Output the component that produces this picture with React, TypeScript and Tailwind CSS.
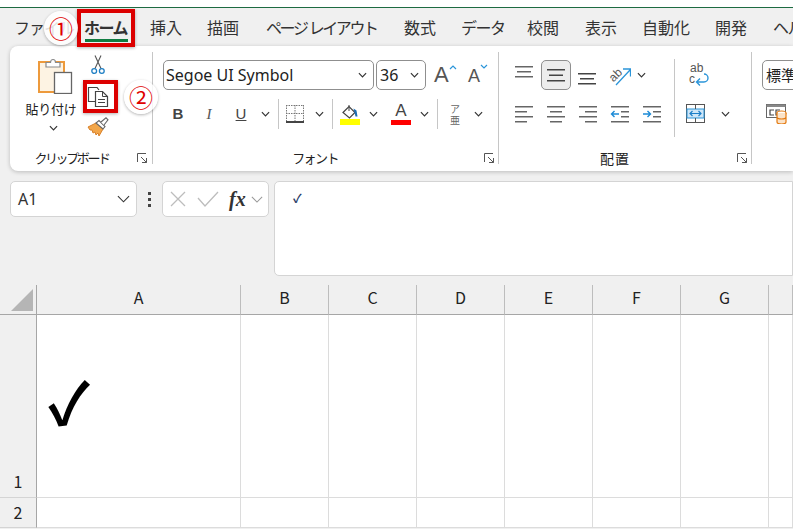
import type { ReactNode } from 'react'

const JP = "font-['Noto_Sans_CJK_JP','Noto_Sans',sans-serif]"

const TABS = [
  { label: 'ファイル', cls: 'tracking-[-1px] w-[48px] ml-[14px]' },
  { label: 'ホーム', cls: 'tracking-[-1.5px] font-bold w-[43px] ml-[22px]' },
  { label: '挿入', cls: 'w-[33px] ml-[23px]' },
  { label: '描画', cls: 'w-[33px] ml-[24px]' },
  { label: 'ページ レイアウト', cls: 'tracking-[-2.4px] [word-spacing:1px] w-[112px] ml-[26px]' },
  { label: '数式', cls: 'w-[33px] ml-[26px]' },
  { label: 'データ', cls: 'tracking-[-1.5px] w-[41px] ml-[24px]' },
  { label: '校閲', cls: 'w-[33px] ml-[25px]' },
  { label: '表示', cls: 'w-[33px] ml-[25px]' },
  { label: '自動化', cls: 'w-[49px] ml-[24px]' },
  { label: '開発', cls: 'w-[33px] ml-[24px]' },
  { label: 'ヘルプ', cls: 'tracking-[-1.5px] w-[45px] ml-[25px]' },
]

function Chevron({ cls = '' }: { cls?: string }) {
  return (
    <svg viewBox="0 0 10 6" className={`w-[9px] h-[6px] shrink-0 ${cls}`}>
      <path d="M1 1l4 4 4-4" fill="none" stroke="#333" strokeWidth="1.3" />
    </svg>
  )
}

function Launcher() {
  return (
    <svg viewBox="0 0 10 10" className="w-[10px] h-[10px] shrink-0">
      <path d="M.5 9V.5H9M4 4l5.5 5.5M9.5 5v4.5H5" fill="none" stroke="#555" strokeWidth="1" />
    </svg>
  )
}

function Sep({ cls = 'h-[112px] mt-[6px]' }: { cls?: string }) {
  return <div className={`w-px shrink-0 bg-[#c6c6c6] ${cls}`} />
}

function GroupFoot({ label, labelCls, launcherCls }: { label: string; labelCls: string; launcherCls: string }) {
  return (
    <div className="h-[26px] flex items-center">
      <div className={`flex-1 text-center text-[#222] ${labelCls}`}>{label}</div>
      <div className={launcherCls}>
        <Launcher />
      </div>
    </div>
  )
}

function Lines({ rows, color = '#666', w = 20 }: { rows: [number, number, number][]; color?: string; w?: number }) {
  return (
    <svg viewBox={`0 0 ${w} 20`} width={w} height={20} className="shrink-0">
      {rows.map(([x, y, l], i) => (
        <rect key={i} x={x} y={y} width={l} height={1.5} fill={color} />
      ))}
    </svg>
  )
}

function Slot({ cls, children }: { cls: string; children: ReactNode }) {
  return <div className={`flex items-center justify-center shrink-0 ${cls}`}>{children}</div>
}

function PasteIcon() {
  return (
    <svg viewBox="0 0 36 38" width={36} height={38}>
      <rect x="2" y="6" width="25" height="30" fill="#fdf3e3" stroke="#ed9a3c" strokeWidth="2" />
      <path d="M9 11V6.5h4.5a2.5 3 0 0 1 5 0H23V11z" fill="#fff" stroke="#8a8a8a" strokeWidth="1.2" />
      <rect x="17.5" y="16.5" width="17" height="21" fill="#fff" stroke="#666" strokeWidth="1.3" />
    </svg>
  )
}

function ScissorsIcon() {
  return (
    <svg viewBox="0 0 14 20" width={14} height={20}>
      <path d="M4 .5l6 13M10 .5l-6 13" stroke="#555" strokeWidth="1.1" fill="none" />
      <circle cx="3.2" cy="16" r="2.4" fill="none" stroke="#1f7fc4" strokeWidth="1.3" />
      <circle cx="10.8" cy="16" r="2.4" fill="none" stroke="#1f7fc4" strokeWidth="1.3" />
    </svg>
  )
}

function CopyIcon() {
  return (
    <svg viewBox="0 0 22 20" width={22} height={20}>
      <path d="M9 14.5H1.5V.5H10l2 2.5" fill="none" stroke="#444" strokeWidth="1.2" />
      <path d="M8.5 4.5h7l5 5v10h-12z" fill="#fff" stroke="#444" strokeWidth="1.2" />
      <path d="M15.5 4.5v5h5M11 12.5h7M11 15.5h7" fill="none" stroke="#444" strokeWidth="1" />
    </svg>
  )
}

function BrushIcon() {
  return (
    <svg viewBox="0 0 22 20" width={22} height={20}>
      <path d="M1 10l8-4 7 6-4 7-1-3-2 2-1-3-2 1-1-3-2 0z" fill="#f2a64a" stroke="#d9812a" strokeWidth="1" />
      <path d="M9 6l7 6 2-2.5-6-6z" fill="#fff" stroke="#666" strokeWidth="1.1" />
      <path d="M14 5l5-4.2 2 2L17 8" fill="#fff" stroke="#666" strokeWidth="1.1" />
    </svg>
  )
}

function BorderIcon() {
  return (
    <svg viewBox="0 0 20 20" width={20} height={20}>
      <path d="M1 1.5h18M1 9.5h18M1.5 1v16M10 1v16M18.5 1v16" stroke="#777" strokeWidth="1" strokeDasharray="1.5 1" fill="none" />
      <rect x="1" y="17" width="18" height="2" fill="#444" />
    </svg>
  )
}

function FillIcon() {
  return (
    <svg viewBox="0 0 20 21" width={20} height={21}>
      <path d="M3 8.5L9 2.5l6 6-5.5 5.5z" fill="#fff" stroke="#444" strokeWidth="1.2" />
      <path d="M9 1v6" stroke="#444" strokeWidth="1" />
      <path d="M13.5 4.5l3 2 1 6h-2z" fill="#1f6fb2" />
      <rect x="0" y="15" width="20" height="6" fill="#ffff00" />
    </svg>
  )
}

function FontColorIcon() {
  return (
    <div className="flex flex-col items-center w-[20px] h-[22px]">
      <span className="text-[17px] leading-[15px] text-[#444] font-['Liberation_Sans',sans-serif]">A</span>
      <span className="w-[20px] h-[5px] bg-[#ff0000] mt-[2px]" />
    </div>
  )
}

function OrientationIcon() {
  return (
    <svg viewBox="0 0 22 22" width={22} height={22}>
      <text x="-1" y="15" fontSize="12" fill="#555" transform="rotate(-45 6 10)" fontFamily="Liberation Sans">ab</text>
      <path d="M7 21L21 6M14 5h7.5v7.5" fill="none" stroke="#2b95d9" strokeWidth="1.3" />
    </svg>
  )
}

function WrapIcon() {
  return (
    <div className="relative w-[20px] h-[24px] font-['Liberation_Sans',sans-serif] text-[12px] leading-[10px] text-[#555]">
      <div className="pl-[1px]">ab</div>
      <div className="mt-[1px]">c</div>
      <svg viewBox="0 0 20 24" width={20} height={24} className="absolute left-0 top-0">
        <path d="M8 19h7a3.5 3.5 0 0 0 0-8M11 15.5L7.5 19l3.5 3.5" fill="none" stroke="#2b95d9" strokeWidth="1.4" />
      </svg>
    </div>
  )
}

function MergeIcon() {
  return (
    <svg viewBox="0 0 20 20" width={20} height={20}>
      <rect x=".5" y=".5" width="18" height="18" fill="#fff" stroke="#555" />
      <rect x="1" y="5" width="17" height="9" fill="#cfe6f7" stroke="#2b95d9" />
      <path d="M9.5 1v4M9.5 14v4" stroke="#555" />
      <path d="M4 9.5h11M6.5 7L4 9.5 6.5 12M12.5 7L15 9.5 12.5 12" fill="none" stroke="#1c7fc9" strokeWidth="1.2" />
    </svg>
  )
}

function IndentIcon({ out }: { out?: boolean }) {
  return (
    <svg viewBox="0 0 20 20" width={20} height={20}>
      <path d="M1 2.7h18M1 17.7h18M11 7.7h8M11 12.7h8" stroke="#666" strokeWidth="1.5" />
      <path
        d={out ? 'M1.5 10H9M4.5 7L1.5 10 4.5 13' : 'M1 10h7.5M5.5 7l3 3-3 3'}
        fill="none"
        stroke="#1c8ad6"
        strokeWidth="1.4"
      />
    </svg>
  )
}

function CondIcon() {
  return (
    <svg viewBox="0 0 22 20" width={22} height={20}>
      <rect x=".5" y=".5" width="19" height="13" fill="#fff" stroke="#666" />
      <rect x=".5" y=".5" width="19" height="2.5" fill="#888" />
      <path d="M8 6H4v5h4M14 6h-4v5h4" fill="none" stroke="#444" strokeWidth="1.2" />
      <ellipse cx="15.5" cy="9" rx="4.5" ry="2" fill="#fff" stroke="#e3790f" strokeWidth="1.2" />
      <path d="M11 9v9a4.5 2 0 0 0 9 0V9M11 13a4.5 2 0 0 0 9 0" fill="#fbe3c8" stroke="#e3790f" strokeWidth="1.2" />
    </svg>
  )
}

function ColumnHeader({ label }: { label: string }) {
  return (
    <div className="h-[30px] bg-[#f0f0f0] border-r border-b border-r-[#bdbdbd] border-b-[#a6a6a6] flex items-center justify-center pb-[5px] text-[16px] text-[#222]">
      {label}
    </div>
  )
}

const COLUMNS = ['B', 'C', 'D', 'E', 'F', 'G', '']

export default function App() {
  return (
    <div className={`relative w-[793px] h-[529px] overflow-hidden bg-[#f0f0f0] ${JP}`}>
      <div className="h-[7px] bg-white" />
      <div className="h-px bg-[#1d6b41]" />

      {/* Tabs */}
      <div className="h-[38px] flex items-center whitespace-nowrap text-[16px] text-[#333]">
        {TABS.map(t => (
          <div key={t.label} className={`shrink-0 ${t.cls}`}>
            {t.label}
          </div>
        ))}
      </div>

      {/* Ribbon */}
      <div className="ml-[10px] h-[125px] bg-white rounded-l-[8px] shadow-[0_1px_4px_rgba(0,0,0,0.22)] flex">
        {/* Clipboard */}
        <div className="w-[142px] shrink-0 flex flex-col">
          <div className="flex-1 flex">
            <div className="w-[68px] ml-[7px] pt-[10px] flex flex-col items-center">
              <div className="ml-[7px]">
                <PasteIcon />
              </div>
              <div className="text-[13px] tracking-[-0.3px] text-[#222] mt-[6px] leading-[18px]">貼り付け</div>
              <Chevron cls="mt-[7px] ml-[4px]" />
            </div>
            <div className="ml-[2px] pt-[9px] flex flex-col items-center w-[22px]">
              <ScissorsIcon />
              <div className="mt-[12px]">
                <CopyIcon />
              </div>
              <div className="mt-[10px]">
                <BrushIcon />
              </div>
            </div>
          </div>
          <GroupFoot label="クリップボード" labelCls="text-[13px] tracking-[-2.4px] pr-[4px]" launcherCls="mr-[5px]" />
        </div>
        <Sep />

        {/* Font */}
        <div className="w-[345px] shrink-0 flex flex-col">
          <div className="flex-1 pt-[14px] pl-[10px]">
            <div className="flex items-center">
              <div className="w-[211px] h-[30px] border border-[#8f8f8f] rounded-[5px] flex items-center pl-[2px] pr-[6px] text-[16px] text-[#222] font-['Noto_Sans',sans-serif]">
                <span className="flex-1">Segoe UI Symbol</span>
                <Chevron />
              </div>
              <div className="ml-[2px] w-[50px] h-[30px] border border-[#8f8f8f] rounded-[5px] flex items-center pl-[3px] pr-[6px] text-[16px] text-[#222] font-['Noto_Sans',sans-serif]">
                <span className="flex-1">36</span>
                <Chevron />
              </div>
              <div className="ml-[8px] w-[22px] flex items-start text-[22px] leading-[24px] text-[#555] font-['Liberation_Sans',sans-serif]">
                A
                <svg viewBox="0 0 8 5" className="w-[8px] h-[5px] mt-[2px] shrink-0">
                  <path d="M1 4l3-3 3 3" fill="none" stroke="#2b95d9" strokeWidth="1.2" />
                </svg>
              </div>
              <div className="ml-[12px] w-[20px] flex items-start text-[18px] leading-[24px] text-[#555] font-['Liberation_Sans',sans-serif]">
                <span className="mt-[2px]">A</span>
                <svg viewBox="0 0 8 5" className="w-[8px] h-[5px] mt-[2px] shrink-0">
                  <path d="M1 1l3 3 3-3" fill="none" stroke="#2b95d9" strokeWidth="1.2" />
                </svg>
              </div>
            </div>
            <div className="flex items-center h-[28px] mt-[10px]">
              <Slot cls="w-[30px] text-[15px] font-bold text-[#444] font-['Liberation_Sans',sans-serif]">B</Slot>
              <Slot cls="w-[32px] text-[15px] italic text-[#555] font-['Liberation_Serif',serif]">I</Slot>
              <Slot cls="w-[32px] text-[15px] text-[#444] underline font-['Liberation_Sans',sans-serif]">U</Slot>
              <Slot cls="w-[16px]">
                <Chevron />
              </Slot>
              <Sep cls="h-[30px] ml-[5px]" />
              <Slot cls="w-[26px] ml-[3px]">
                <BorderIcon />
              </Slot>
              <Slot cls="w-[22px]">
                <Chevron />
              </Slot>
              <Sep cls="h-[30px] ml-[2px]" />
              <Slot cls="w-[27px] ml-[3px]">
                <FillIcon />
              </Slot>
              <Slot cls="w-[20px]">
                <Chevron />
              </Slot>
              <Slot cls="w-[36px]">
                <FontColorIcon />
              </Slot>
              <Slot cls="w-[10px]">
                <Chevron />
              </Slot>
              <Sep cls="h-[30px] ml-[8px]" />
              <Slot cls="w-[34px] text-[10px] leading-[11px] text-[#666] text-center">
                <div>
                  ア
                  <br />亜
                </div>
              </Slot>
              <Slot cls="w-[12px]">
                <Chevron />
              </Slot>
            </div>
          </div>
          <GroupFoot label="フォント" labelCls="text-[13px] tracking-[-1.6px]" launcherCls="ml-[7px] mr-[4px]" />
        </div>
        <Sep />

        {/* Alignment */}
        <div className="w-[252px] shrink-0 flex flex-col">
          <div className="flex-1 flex pt-[14px]">
            <div className="w-[175px] pl-[9px]">
              <div className="flex items-center h-[30px]">
                <Slot cls="w-[32px] mb-[2px]">
                  <Lines rows={[[1, 2, 18], [3, 7, 14], [1, 12, 18]]} />
                </Slot>
                <Slot cls="w-[30px] h-[30px] bg-[#ededed] border border-[#8f8f8f] rounded-[5px] ml-px">
                  <Lines rows={[[1, 4, 18], [3, 9.5, 14], [1, 15, 18]]} color="#444" />
                </Slot>
                <Slot cls="w-[32px]">
                  <Lines rows={[[1, 8, 18], [3, 13, 14], [1, 18, 18]]} color="#444" />
                </Slot>
                <Slot cls="w-[24px] ml-[5px]">
                  <OrientationIcon />
                </Slot>
                <Slot cls="w-[18px]">
                  <Chevron />
                </Slot>
              </div>
              <div className="flex items-center h-[28px] mt-[10px]">
                <Slot cls="w-[32px]">
                  <Lines rows={[[1, 2, 18], [1, 7, 12], [1, 12, 18], [1, 17, 12]]} />
                </Slot>
                <Slot cls="w-[32px]">
                  <Lines rows={[[1, 2, 18], [4, 7, 12], [1, 12, 18], [4, 17, 12]]} />
                </Slot>
                <Slot cls="w-[32px]">
                  <Lines rows={[[1, 2, 18], [7, 7, 12], [1, 12, 18], [7, 17, 12]]} />
                </Slot>
                <Slot cls="w-[32px]">
                  <IndentIcon out />
                </Slot>
                <Slot cls="w-[32px]">
                  <IndentIcon />
                </Slot>
              </div>
            </div>
            <Sep cls="h-[78px] -mt-[1px]" />
            <div className="pl-[11px]">
              <div className="h-[30px] flex items-center pl-[3px]">
                <WrapIcon />
              </div>
              <div className="flex items-center h-[28px] mt-[10px]">
                <MergeIcon />
                <Chevron cls="ml-[15px]" />
              </div>
            </div>
          </div>
          <GroupFoot label="配置" labelCls="text-[14px] tracking-[1px]" launcherCls="ml-[6px] mr-[4px]" />
        </div>
        <Sep />

        {/* Number */}
        <div className="flex-1 overflow-hidden pt-[14px] pl-[10px]">
          <div className="w-[60px] h-[30px] border border-[#8f8f8f] rounded-[5px] flex items-center pl-[3px] text-[15px] text-[#222]">
            標準
          </div>
          <div className="h-[28px] mt-[10px] flex items-center pl-[4px]">
            <CondIcon />
          </div>
        </div>
      </div>

      {/* Formula bar */}
      <div className="mt-[10px] h-[95px] flex items-start">
        <div className="ml-[10px] w-[127px] h-[36px] bg-white border border-[#d4d4d4] rounded-[5px] flex items-center pl-[7px] pr-[6px] text-[16px] text-[#333] font-['Noto_Sans',sans-serif]">
          <span className="flex-1">A1</span>
          <svg viewBox="0 0 14 8" className="w-[13px] h-[8px]">
            <path d="M1 1l6 6 6-6" fill="none" stroke="#333" strokeWidth="1.2" />
          </svg>
        </div>
        <div className="w-[25px] h-[36px] flex flex-col items-center justify-center gap-[3px]">
          <span className="w-[3px] h-[3px] bg-[#444]" />
          <span className="w-[3px] h-[3px] bg-[#444]" />
          <span className="w-[3px] h-[3px] bg-[#444]" />
        </div>
        <div className="w-[107px] h-[36px] bg-white border border-[#d4d4d4] rounded-[5px] flex items-center pl-[7px]">
          <svg viewBox="0 0 16 16" className="w-[16px] h-[16px]">
            <path d="M1 1l14 14M15 1L1 15" stroke="#bdbdbd" strokeWidth="1.3" />
          </svg>
          <svg viewBox="0 0 22 16" className="w-[22px] h-[16px] ml-[11px]">
            <path d="M1 7l7 8L21 1" fill="none" stroke="#bdbdbd" strokeWidth="1.3" />
          </svg>
          <span className="ml-[10px] text-[20px] leading-none font-bold italic text-[#333] font-['Liberation_Serif',serif]">fx</span>
          <svg viewBox="0 0 14 8" className="w-[12px] h-[7px] ml-[5px]">
            <path d="M1 1l6 6 6-6" fill="none" stroke="#999" strokeWidth="1.2" />
          </svg>
        </div>
        <div className="ml-[5px] flex-1 h-[95px] bg-white border border-[#d4d4d4] rounded-l-[5px] pl-[18px] pt-[6px] text-[12px] font-bold leading-[20px] text-[#1f3a66]">
          ✓
        </div>
      </div>

      {/* Sheet */}
      <div className="mt-[9px] grid grid-cols-[37px_204px_88px_88px_88px_88px_88px_88px_24px] grid-rows-[30px_183px_30px]">
        <div className="h-[30px] border-r border-b border-r-[#a6a6a6] border-b-[#a6a6a6] flex items-end justify-end pr-[3px] pb-[3px]">
          <svg viewBox="0 0 22 22" className="w-[22px] h-[22px]">
            <path d="M22 0v22H0z" fill="#b5b5b5" />
          </svg>
        </div>
        <ColumnHeader label="A" />
        {COLUMNS.map(c => (
          <ColumnHeader key={c} label={c} />
        ))}

        <div className="bg-[#f0f0f0] border-r border-b border-r-[#a6a6a6] border-b-[#d4d4d4] flex items-end justify-center pb-[4px] text-[16px] text-[#222]">
          1
        </div>
        <div className="bg-white border-r border-b border-[#dcdcdc] flex items-center pl-[11px] pb-[12px] text-[58px] font-bold leading-none text-black">
          ✓
        </div>
        {COLUMNS.map(c => (
          <div key={c} className="bg-white border-r border-b border-[#dcdcdc]" />
        ))}

        <div className="bg-[#f0f0f0] border-r border-b border-r-[#a6a6a6] border-b-[#d4d4d4] flex items-center justify-center pb-[2px] text-[16px] text-[#222]">
          2
        </div>
        <div className="bg-white border-r border-b border-[#dcdcdc]" />
        {COLUMNS.map(c => (
          <div key={c} className="bg-white border-r border-b border-[#dcdcdc]" />
        ))}
      </div>

      {/* Annotations */}
      <div className="absolute left-[77px] top-[9px] w-[58px] h-[38px] border-[4px] border-[#dc0000] shadow-[0_1px_3px_rgba(0,0,0,0.3)] flex items-end justify-center pb-[1px]">
        <div className="w-[43px] h-[3px] bg-[#107c41]" />
      </div>
      <div className="absolute left-[83px] top-[80px] w-[35px] h-[33px] border-[4px] border-[#dc0000] shadow-[0_1px_3px_rgba(0,0,0,0.3)]" />
      <div className="absolute left-[44px] top-[11px] w-[34px] h-[34px] rounded-full bg-white/85 shadow-[0_1px_3px_rgba(0,0,0,0.3)] flex items-center justify-center text-[24px] leading-none text-[#e00000]">
        ①
      </div>
      <div className="absolute left-[124px] top-[80px] w-[34px] h-[34px] rounded-full bg-white/85 shadow-[0_1px_3px_rgba(0,0,0,0.3)] flex items-center justify-center text-[24px] leading-none text-[#e00000]">
        ②
      </div>
    </div>
  )
}
